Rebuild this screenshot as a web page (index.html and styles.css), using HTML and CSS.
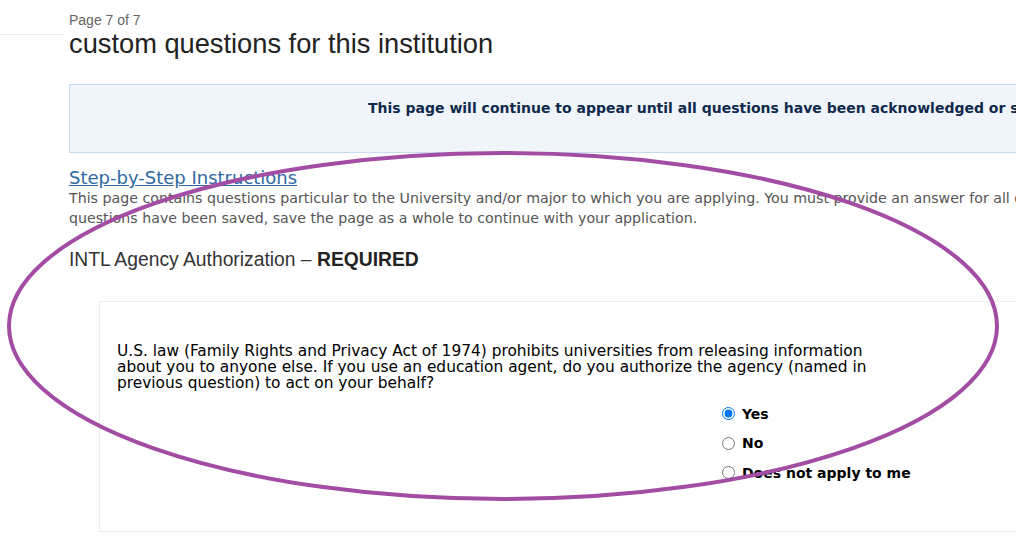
FILE: index.html
```html
<!DOCTYPE html>
<html>
<head>
<meta charset="utf-8">
<link rel="stylesheet" href="styles.css">
</head>
<body>
<div class="page">
  <div class="topline"></div>
  <div class="content">
    <header class="head">
      <div class="pagenum">Page 7 of 7</div>
      <h1 class="title">custom questions for this institution</h1>
    </header>
    <div class="notice">
      <p class="notice-text">This page will continue to appear until all questions have been acknowledged or saved.</p>
    </div>
    <a class="steps" href="#">Step-by-Step Instructions</a>
    <p class="intro">This page contains questions particular to the University and/or major to which you are applying. You must provide an answer for all questions. Once all<br>questions have been saved, save the page as a whole to continue with your application.</p>
    <h2 class="qtitle">INTL Agency Authorization – <b>REQUIRED</b></h2>
    <div class="card">
      <p class="question">U.S. law (Family Rights and Privacy Act of 1974) prohibits universities from releasing information about you to anyone else. If you use an education agent, do you authorize the agency (named in previous question) to act on your behalf?</p>
      <div class="options">
        <label class="opt"><input type="radio" name="a" checked><span>Yes</span></label>
        <label class="opt"><input type="radio" name="a"><span>No</span></label>
        <label class="opt"><input type="radio" name="a"><span>Does not apply to me</span></label>
      </div>
    </div>
  </div>
  <svg class="ring" width="1016" height="550" viewBox="0 0 1016 550">
    <ellipse cx="503" cy="326" rx="494" ry="173" fill="none" stroke="#a34ca3" stroke-width="4"/>
  </svg>
</div>
</body>
</html>
```
FILE: styles.css
```css
html, body {
  margin: 0;
  padding: 0;
  overflow: hidden;
  background: #fff;
}
.page {
  position: relative;
  width: 1016px;
  height: 550px;
  overflow: hidden;
  font-family: "DejaVu Sans", Verdana, sans-serif;
}
.topline {
  position: absolute;
  left: 0;
  top: 34px;
  width: 64px;
  height: 1px;
  background: #e8e8e8;
}
.content {
  padding-left: 69px;
  width: 1300px;
}
.head {
  padding-top: 12px;
}
.pagenum {
  font-family: "Liberation Sans", Arial, sans-serif;
  font-size: 14px;
  line-height: 16px;
  color: #666;
}
.title {
  margin: 0;
  font-family: "Liberation Sans", Arial, sans-serif;
  font-weight: normal;
  font-size: 27.25px;
  line-height: 32px;
  color: #222;
}
.notice {
  margin-top: 24px;
  background: #f0f5fc;
  border: 1px solid #c6dbf0;
  box-sizing: border-box;
  height: 69px;
}
.notice-text {
  margin: 0;
  padding: 15px 0 0 298px;
  font-weight: bold;
  font-size: 14px;
  line-height: 16px;
  color: #102a4c;
}
.steps {
  display: inline-block;
  margin-top: 15px;
  font-size: 18px;
  line-height: 20px;
  color: #2f6aa0;
  text-decoration: underline;
}
.intro {
  margin: 0;
  font-size: 14.2px;
  line-height: 20px;
  color: #555;
}
.qtitle {
  margin: 20px 0 0;
  font-family: "Liberation Sans", Arial, sans-serif;
  font-weight: normal;
  font-size: 19.3px;
  line-height: 24px;
  color: #333;
}
.qtitle b {
  font-weight: bold;
  color: #222;
}
.card {
  margin: 29px 0 0 30px;
  height: 231px;
  box-sizing: border-box;
  border: 1px solid #ececec;
  padding: 41px 0 0 17px;
}
.question {
  margin: 0;
  width: 760px;
  font-size: 15.4px;
  line-height: 16px;
  color: #000;
}
.options {
  margin: 13px 0 0 605px;
  display: flex;
  flex-direction: column;
  gap: 10.5px;
}
.opt {
  display: flex;
  align-items: center;
  height: 19px;
  font-weight: bold;
  font-size: 14px;
  color: #000;
}
.opt input {
  margin: 0 7px 0 0;
  width: 13px;
  height: 13px;
}
.ring {
  position: absolute;
  left: 0;
  top: 0;
  pointer-events: none;
}
```
